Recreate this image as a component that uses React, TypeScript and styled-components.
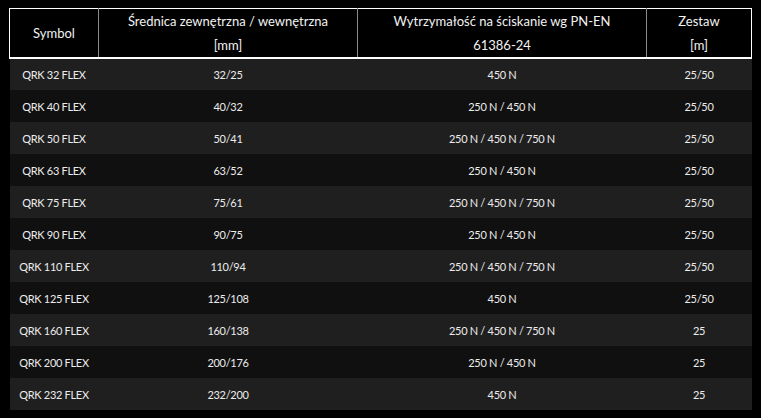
import React from "react";
import styled, { createGlobalStyle } from "styled-components";

const GlobalStyle = createGlobalStyle`
  html, body {
    margin: 0;
    background-color: #000;
  }
  body {
    padding: 8px 10px 0 9px;
    font-family: "Lato", "Noto Sans", sans-serif;
  }
`;

const Table = styled.table`
  width: 742px;
  border-collapse: collapse;
  table-layout: fixed;
  color: #ececec;
`;

const HeadCell = styled.th<{ $width: number }>`
  width: ${(p) => p.$width}px;
  height: 49px;
  padding: 0 4px;
  box-sizing: border-box;
  font-weight: 400;
  font-size: 13px;
  line-height: 24px;
  color: #f2f2f2;
  background: #000;
  text-align: center;
  vertical-align: middle;
  border-top: 1px solid #fff;
  border-bottom: 2px solid #fff;
  border-left: 1px solid #8a8a8a;
  border-right: 1px solid #8a8a8a;

  &:first-child {
    border-left: 1px solid #fff;
  }
  &:last-child {
    border-right: 1px solid #fff;
  }
`;

const Row = styled.tr<{ $odd: boolean }>`
  height: 32px;
  background: ${(p) => (p.$odd ? "#1f1f1f" : "#101010")};
`;

const Cell = styled.td`
  padding: 0 4px;
  font-size: 11px;
  letter-spacing: -0.3px;
  text-align: center;
  vertical-align: middle;
  white-space: nowrap;
`;

const rows = [
  ["QRK 32 FLEX", "32/25", "450 N", "25/50"],
  ["QRK 40 FLEX", "40/32", "250 N / 450 N", "25/50"],
  ["QRK 50 FLEX", "50/41", "250 N / 450 N / 750 N", "25/50"],
  ["QRK 63 FLEX", "63/52", "250 N / 450 N", "25/50"],
  ["QRK 75 FLEX", "75/61", "250 N / 450 N / 750 N", "25/50"],
  ["QRK 90 FLEX", "90/75", "250 N / 450 N", "25/50"],
  ["QRK 110 FLEX", "110/94", "250 N / 450 N / 750 N", "25/50"],
  ["QRK 125 FLEX", "125/108", "450 N", "25/50"],
  ["QRK 160 FLEX", "160/138", "250 N / 450 N / 750 N", "25"],
  ["QRK 200 FLEX", "200/176", "250 N / 450 N", "25"],
  ["QRK 232 FLEX", "232/200", "450 N", "25"],
];

function App() {
  return (
    <>
      <GlobalStyle />
      <Table>
        <thead>
          <tr>
            <HeadCell $width={89}>Symbol</HeadCell>
            <HeadCell $width={259}>
              Średnica zewnętrzna / wewnętrzna
              <br />
              [mm]
            </HeadCell>
            <HeadCell $width={289}>
              Wytrzymałość na ściskanie wg PN-EN
              <br />
              61386-24
            </HeadCell>
            <HeadCell $width={105}>
              Zestaw
              <br />
              [m]
            </HeadCell>
          </tr>
        </thead>
        <tbody>
          {rows.map((r, i) => (
            <Row key={r[0]} $odd={i % 2 === 0}>
              {r.map((c, j) => (
                <Cell key={j}>{c}</Cell>
              ))}
            </Row>
          ))}
        </tbody>
      </Table>
    </>
  );
}

export default App;
